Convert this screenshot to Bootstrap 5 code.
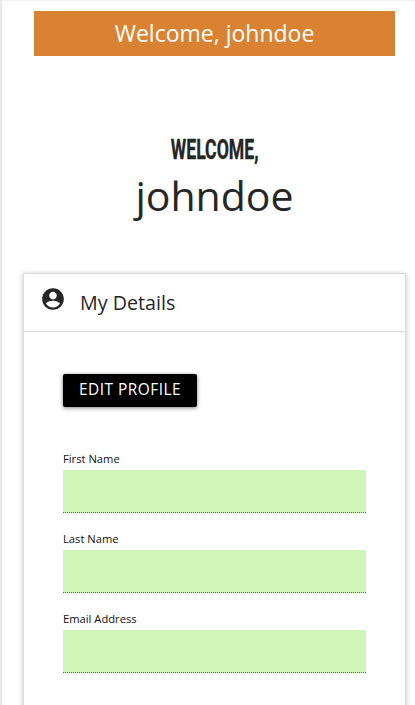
<!DOCTYPE html>
<html lang="en">
<head>
<meta charset="utf-8">
<meta name="viewport" content="width=device-width, initial-scale=1">
<title>My Details</title>
<link href="https://cdn.jsdelivr.net/npm/bootstrap@5.3.0/dist/css/bootstrap.min.css" rel="stylesheet">
<style>
body{font-family:"Open Sans","Noto Sans",sans-serif;color:#262626;background:#fff;height:705px;overflow:hidden}
.page-shell{height:705px;border-left:2px solid #e8e8e8;padding:11px 9px 0 21px;box-shadow:inset 0 2px 2px -1px #eee}
.banner{background:#d98332;height:45px;margin:0 11px;font-size:23px;line-height:45px}
.greeting{margin-top:77px;height:140px}
.greeting h1{font:700 28px/34px Roboto,sans-serif;margin:0;color:#262626}
.greeting h1 span{display:inline-block;transform:scaleX(.63);-webkit-text-stroke:.4px #262626}
.user-name{font-size:41px;line-height:56px}
.details-card{height:460px;border:1px solid #dcdcdc;border-radius:0;box-shadow:0 1px 5px rgba(0,0,0,.25);--bs-card-border-radius:0}
.details-head{height:58px;border-bottom:1px solid #dcdcdc;padding-left:15.500px}
.details-head svg{margin-bottom:8px}
.details-head h2{font-size:19.7px;line-height:26px;margin:0 0 0 14.500px}
.details-body{padding:42px 39px 0}
.edit-btn{--bs-btn-color:#fff;--bs-btn-bg:#000;--bs-btn-hover-bg:#222;--bs-btn-hover-color:#fff;width:134px;height:33px;padding:0 0 2px;border:0;border-radius:2px;font-size:15.4px;line-height:31px;letter-spacing:.5px;box-shadow:0 1px 4px rgba(0,0,0,.5)}
.fields{margin-top:44px}
.field-row{height:80px}
.field-row label{display:block;font-size:11.2px;line-height:16px;height:19px;margin:0;color:#111}
.field-row input{height:43px;background:#cff6b8!important;border:0;border-bottom:1px dotted #3f7f2f;border-radius:0}
</style>
</head>
<body>
<div class="page-shell">
  <div class="banner text-white text-center">Welcome, johndoe</div>
  <div class="greeting text-center">
    <h1><span>WELCOME,</span></h1>
    <div class="user-name">johndoe</div>
  </div>
  <div class="card details-card">
    <div class="details-head d-flex align-items-center">
      <svg width="26" height="26" viewBox="0 0 24 24" fill="#262626"><path d="M12 2C6.480 2 2 6.480 2 12s4.480 10 10 10 10-4.480 10-10S17.520 2 12 2zm0 3.200c2 0 3.500 1.600 3.500 3.600S14 12.400 12 12.400 8.500 10.800 8.500 8.800 10 5.200 12 5.200zm0 14.600c-2.700 0-5-1.300-6.400-3.400.4-1.800 4.200-2.700 6.400-2.700s6 .9 6.400 2.700c-1.400 2.100-3.700 3.400-6.400 3.400z"/></svg>
      <h2 class="fw-normal">My Details</h2>
    </div>
    <div class="details-body">
      <button type="button" class="btn edit-btn d-block">EDIT PROFILE</button>
      <form class="fields">
        <div class="field-row"><label for="first">First Name</label><input id="first" class="form-control" type="text"></div>
        <div class="field-row"><label for="last">Last Name</label><input id="last" class="form-control" type="text"></div>
        <div class="field-row"><label for="email">Email Address</label><input id="email" class="form-control" type="email"></div>
      </form>
    </div>
  </div>
</div>
<script src="https://cdn.jsdelivr.net/npm/bootstrap@5.3.0/dist/js/bootstrap.bundle.min.js"></script>
</body>
</html>
